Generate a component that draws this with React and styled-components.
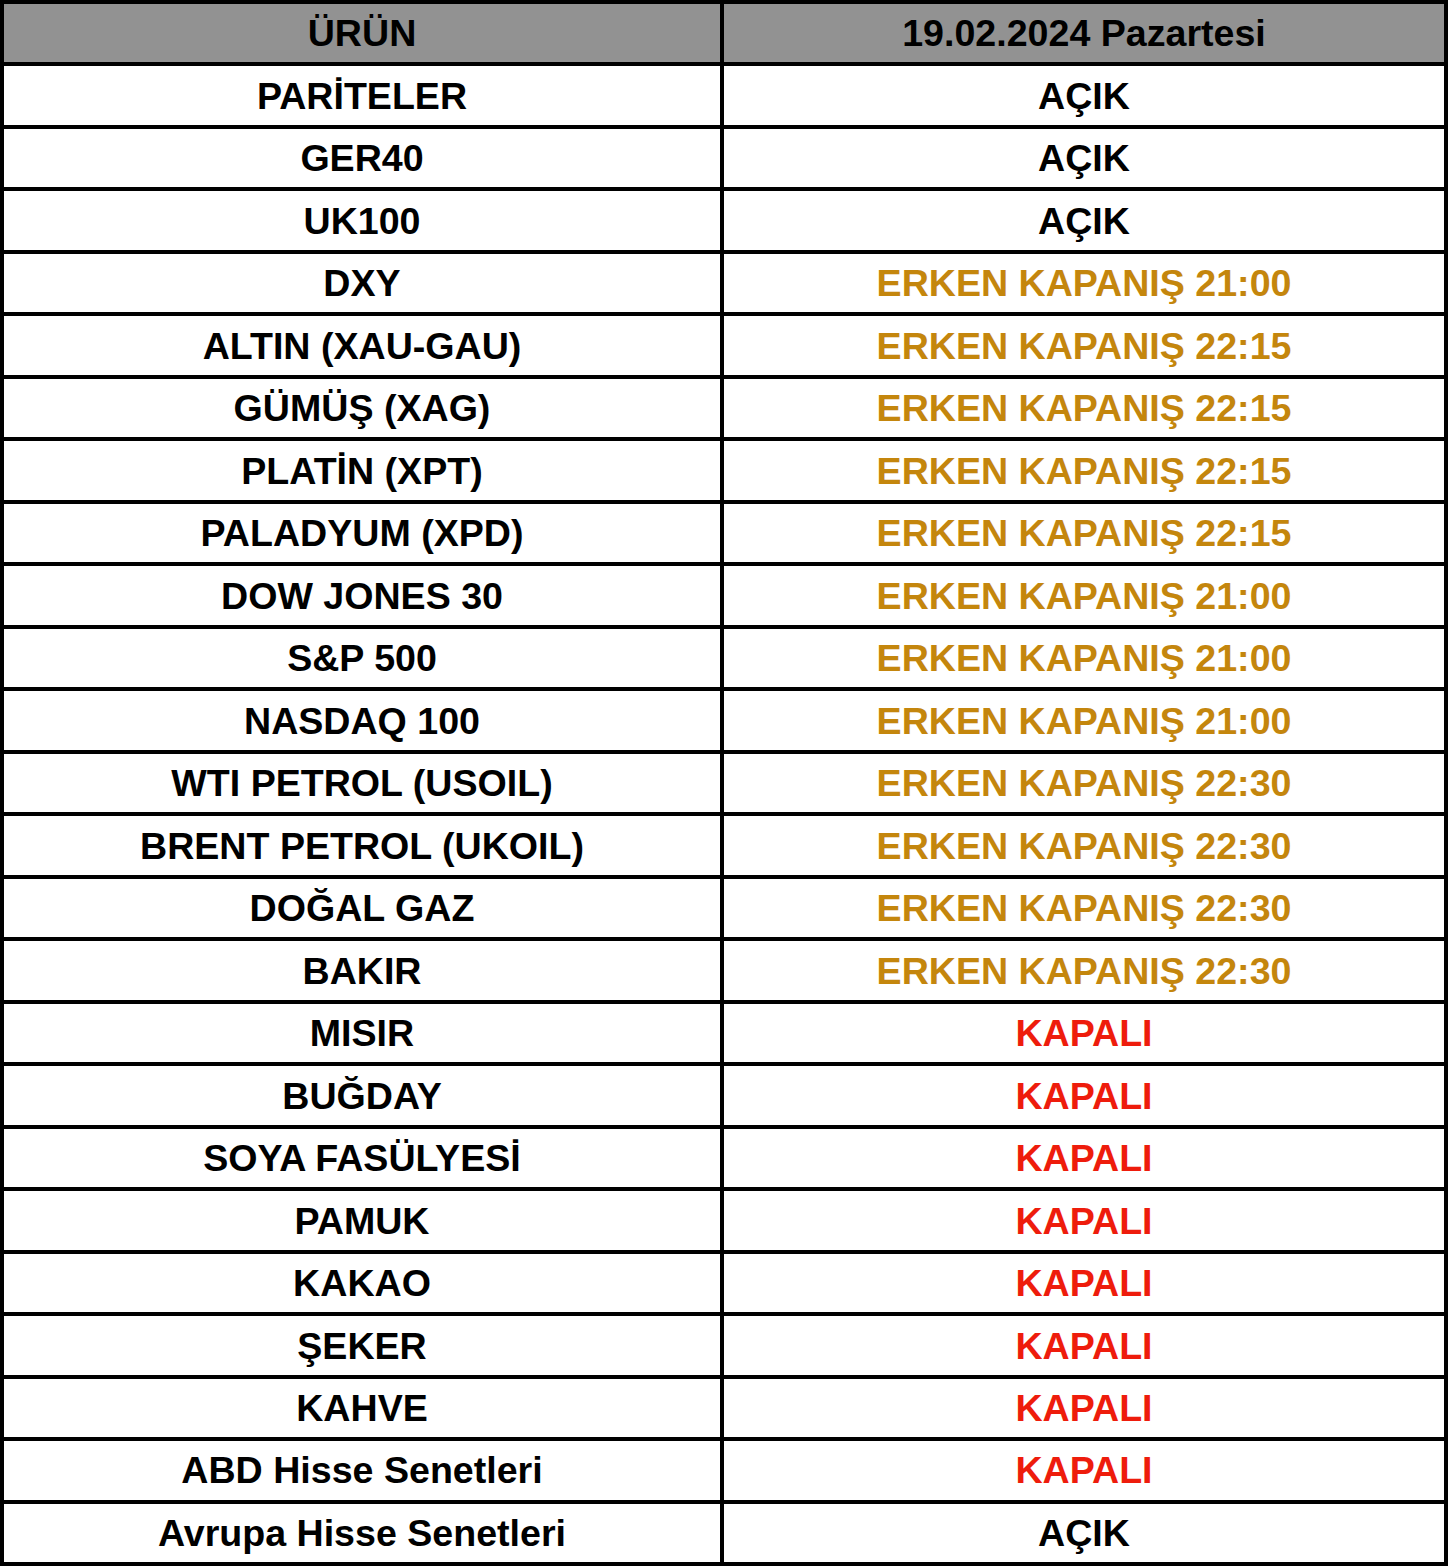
import React from "react";
import styled, { createGlobalStyle } from "styled-components";

const GlobalStyle = createGlobalStyle`
  html, body {
    margin: 0;
    padding: 0;
    background: #fff;
  }
  body {
    font-family: "Liberation Sans", Arial, Helvetica, sans-serif;
  }
`;

const rows = [
  ["PARİTELER", "AÇIK", "open"],
  ["GER40", "AÇIK", "open"],
  ["UK100", "AÇIK", "open"],
  ["DXY", "ERKEN KAPANIŞ 21:00", "early"],
  ["ALTIN (XAU-GAU)", "ERKEN KAPANIŞ 22:15", "early"],
  ["GÜMÜŞ (XAG)", "ERKEN KAPANIŞ 22:15", "early"],
  ["PLATİN (XPT)", "ERKEN KAPANIŞ 22:15", "early"],
  ["PALADYUM (XPD)", "ERKEN KAPANIŞ 22:15", "early"],
  ["DOW JONES 30", "ERKEN KAPANIŞ 21:00", "early"],
  ["S&P 500", "ERKEN KAPANIŞ 21:00", "early"],
  ["NASDAQ 100", "ERKEN KAPANIŞ 21:00", "early"],
  ["WTI PETROL (USOIL)", "ERKEN KAPANIŞ 22:30", "early"],
  ["BRENT PETROL (UKOIL)", "ERKEN KAPANIŞ 22:30", "early"],
  ["DOĞAL GAZ", "ERKEN KAPANIŞ 22:30", "early"],
  ["BAKIR", "ERKEN KAPANIŞ 22:30", "early"],
  ["MISIR", "KAPALI", "closed"],
  ["BUĞDAY", "KAPALI", "closed"],
  ["SOYA FASÜLYESİ", "KAPALI", "closed"],
  ["PAMUK", "KAPALI", "closed"],
  ["KAKAO", "KAPALI", "closed"],
  ["ŞEKER", "KAPALI", "closed"],
  ["KAHVE", "KAPALI", "closed"],
  ["ABD Hisse Senetleri", "KAPALI", "closed"],
  ["Avrupa Hisse Senetleri", "AÇIK", "open"],
];

const statusColors = {
  open: "#000000",
  early: "#c4860d",
  closed: "#ee1c0c",
};

const Table = styled.div`
  display: grid;
  grid-template-columns: 716px 720px;
  grid-auto-rows: 1fr;
  gap: 4px;
  padding: 4px;
  width: 1448px;
  height: 1566px;
  box-sizing: border-box;
  background: #000;
`;

const Cell = styled.div`
  display: flex;
  align-items: center;
  justify-content: center;
  padding-top: 2px;
  background: ${(p) => (p.$head ? "#929292" : "#fff")};
  color: ${(p) => p.$color || "#000"};
  font-size: 37.6px;
  font-weight: 700;
  white-space: nowrap;
  line-height: 1;
`;

export default function App() {
  return (
    <>
      <GlobalStyle />
      <Table>
        <Cell $head>ÜRÜN</Cell>
        <Cell $head>19.02.2024 Pazartesi</Cell>
        {rows.map(([name, status, kind]) => (
          <React.Fragment key={name}>
            <Cell>{name}</Cell>
            <Cell $color={statusColors[kind]}>{status}</Cell>
          </React.Fragment>
        ))}
      </Table>
    </>
  );
}
